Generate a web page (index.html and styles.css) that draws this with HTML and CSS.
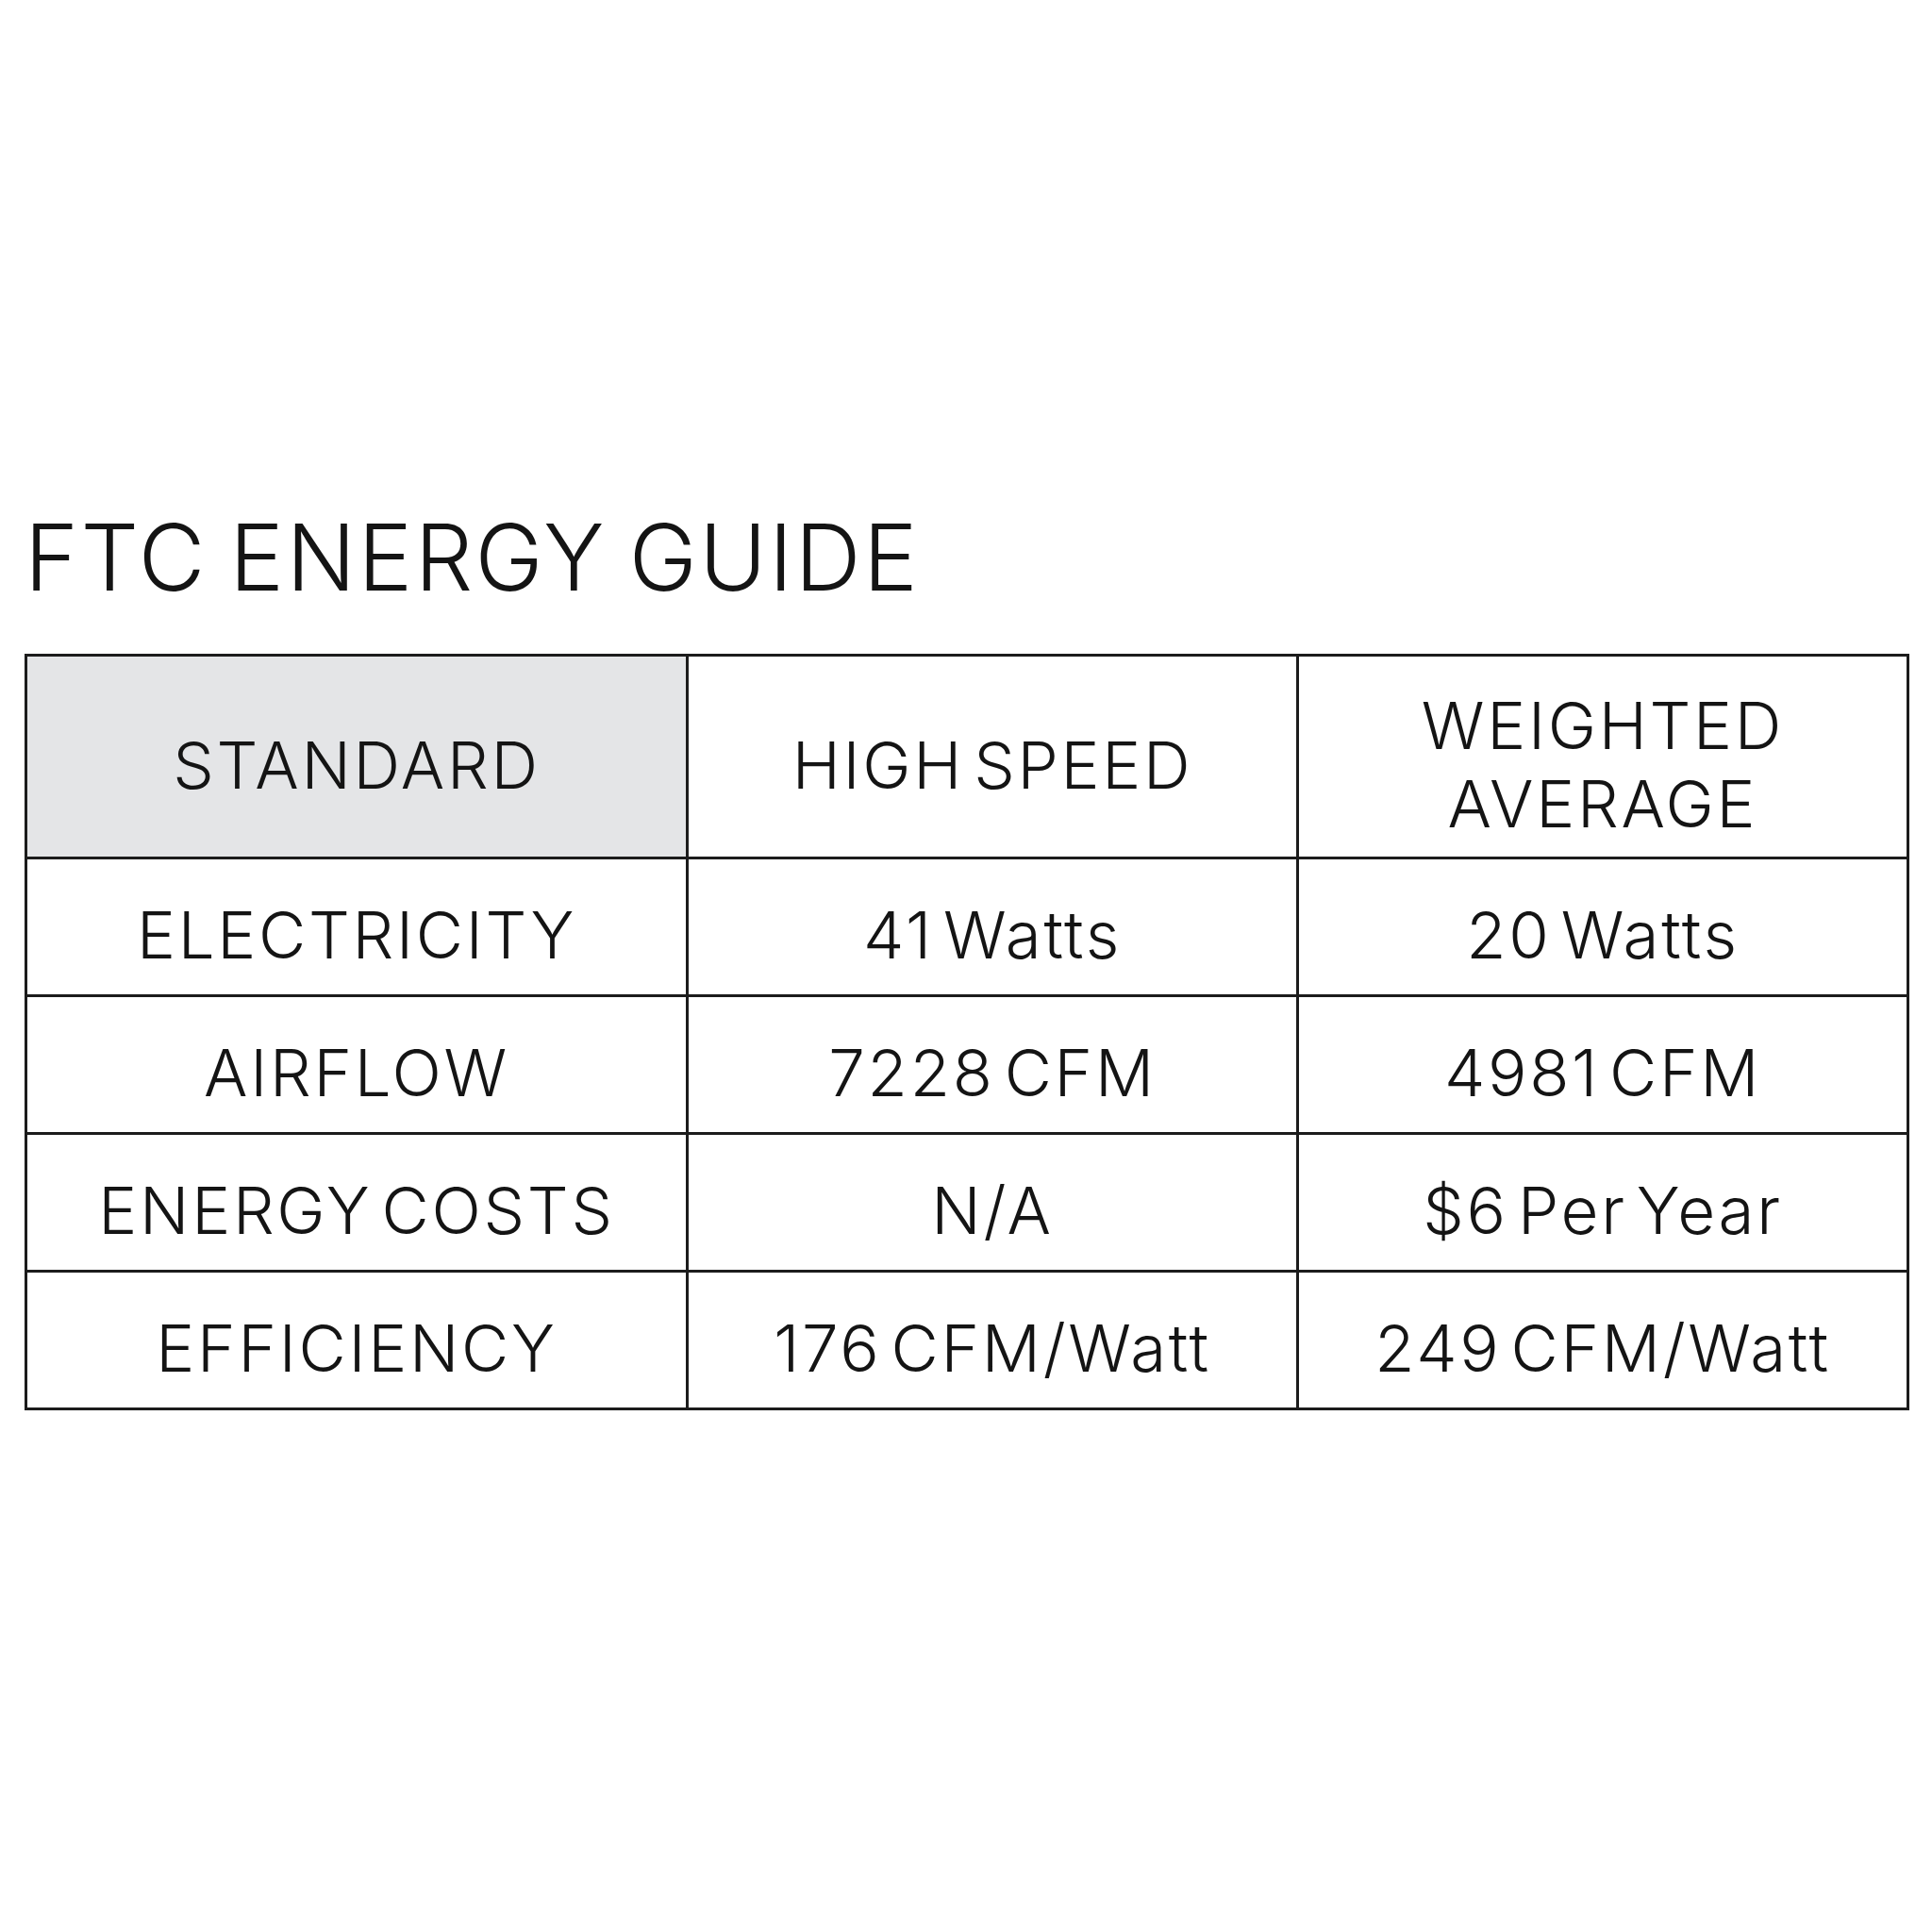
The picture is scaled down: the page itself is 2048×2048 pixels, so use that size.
FILE: index.html
```html
<!DOCTYPE html>
<html lang="en">
<head>
<meta charset="utf-8">
<title>FTC Energy Guide</title>
<link rel="stylesheet" href="styles.css">
</head>
<body>
<main class="page">
  <h1 class="title">FTC ENERGY GUIDE</h1>
  <table class="guide">
    <colgroup>
      <col class="col-label">
      <col class="col-value">
      <col class="col-value">
    </colgroup>
    <thead>
      <tr class="head-row">
        <th class="cell cell-standard">STANDARD</th>
        <th class="cell">HIGH SPEED</th>
        <th class="cell">WEIGHTED<br>AVERAGE</th>
      </tr>
    </thead>
    <tbody>
      <tr class="body-row">
        <td class="cell">ELECTRICITY</td>
        <td class="cell">41 Watts</td>
        <td class="cell">20 Watts</td>
      </tr>
      <tr class="body-row">
        <td class="cell">AIRFLOW</td>
        <td class="cell">7228 CFM</td>
        <td class="cell">4981 CFM</td>
      </tr>
      <tr class="body-row">
        <td class="cell">ENERGY COSTS</td>
        <td class="cell">N/A</td>
        <td class="cell">$6 Per Year</td>
      </tr>
      <tr class="body-row">
        <td class="cell">EFFICIENCY</td>
        <td class="cell">176 CFM/Watt</td>
        <td class="cell">249 CFM/Watt</td>
      </tr>
    </tbody>
  </table>
</main>
</body>
</html>
```

FILE: styles.css
```css
html, body {
  margin: 0;
  padding: 0;
  background: #ffffff;
}

.page {
  padding: 542px 26px 0 26px;
  font-family: Inter, "Liberation Sans", sans-serif;
  color: #141414;
}

.title {
  margin: 0 0 54px 0;
  font-size: 97px;
  line-height: 1;
  font-weight: 300;
  letter-spacing: 2.4px;
  word-spacing: -6px;
}

.guide {
  width: 1996px;
  border-collapse: collapse;
  table-layout: fixed;
  border: 3px solid #1c1c1c;
}

.col-label { width: 701px; }
.col-value { width: 647px; }

.cell {
  border: 3px solid #1c1c1c;
  text-align: center;
  vertical-align: middle;
  font-size: 69px;
  font-weight: 300;
  line-height: 83px;
  padding: 18px 0 0 0;
  letter-spacing: 2.7px;
  word-spacing: -12px;
}

.head-row .cell {
  height: 194px;
}

.body-row .cell {
  height: 125px;
}

.cell-standard {
  background: #e4e5e7;
}
```
